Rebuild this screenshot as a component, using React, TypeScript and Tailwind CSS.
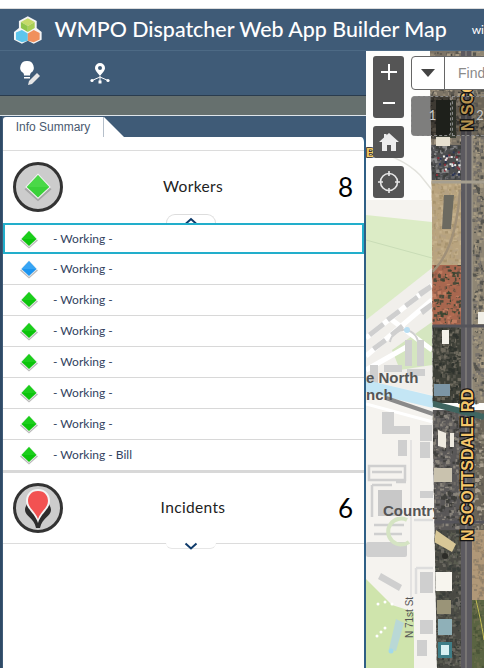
import React from "react";

function rng(seed: number) {
  let s = seed;
  return () => {
    s = (s * 16807) % 2147483647;
    return s / 2147483647;
  };
}

const regions: [number, number, number, number, string[]][] = [
  [428, 51, 36, 94, ["#7d7466", "#5b574f", "#968a76", "#46443f", "#a89c88"]],
  [428, 145, 34, 35, ["#4c4d4f", "#6a6a6c", "#3c3e3c", "#8a8a8a"]],
  [428, 180, 34, 85, ["#b9a47f", "#c4b08c", "#a8946f", "#b5a283"]],
  [428, 265, 34, 60, ["#a8674f", "#c07c60", "#3e4632", "#8f5d4a", "#b06a50", "#4a4a3a"]],
  [428, 325, 34, 78, ["#3e4038", "#54534a", "#2f332e", "#6e6a5e"]],
  [472, 51, 12, 352, ["#8f8674", "#75706a", "#a89c84", "#55544e"]],
  [428, 410, 34, 120, ["#5a5858", "#3f3f3c", "#6f6b66", "#8a857c"]],
  [472, 410, 12, 120, ["#6a6458", "#86806f", "#5a5650", "#aaa090"]],
  [428, 530, 34, 138, ["#4a4a44", "#3a3e3a", "#6a6860", "#5a5c50"]],
  [472, 530, 12, 70, ["#b09878", "#a08a6c", "#90806a"]],
  [472, 600, 12, 68, ["#5a6442", "#4a5438", "#6a6c4c"]],
];

function SatTexture() {
  const r = rng(4242);
  const items: React.ReactNode[] = [];
  regions.forEach(([x, y, w, h, cols], n) => {
    items.push(<rect key={`b${n}`} x={x} y={y} width={w} height={h} fill={cols[0]} />);
    const count = Math.floor((w * h) / 7);
    for (let i = 0; i < count; i++) {
      items.push(
        <rect
          key={`${n}-${i}`}
          x={x + r() * (w - 2)}
          y={y + r() * (h - 2)}
          width={1 + r() * 3}
          height={1 + r() * 3}
          fill={cols[Math.floor(r() * cols.length)]}
        />
      );
    }
  });
  return <g>{items}</g>;
}

function Cars() {
  const r = rng(7);
  const items: React.ReactNode[] = [];
  for (let i = 0; i < 36; i++) {
    items.push(<rect key={i} x={436 + r() * 24} y={150 + r() * 26} width={2} height={2} fill={["#8a2f3a", "#e8e8e8", "#2b3555"][i % 3]} />);
  }
  return <g>{items}</g>;
}

function MapDrawing() {
  const roadLabel = {
    fontFamily: "'Liberation Sans', sans-serif",
    fontWeight: 700,
    fontSize: 16,
    fill: "#f5c56a",
    stroke: "#141414",
    strokeWidth: 2.6,
    paintOrder: "stroke",
  } as React.CSSProperties;
  const place = { fontFamily: "'Liberation Sans', sans-serif", fontWeight: 700, fill: "#555555", fontSize: 15 } as React.CSSProperties;
  return (
    <svg viewBox="366 51 118 617" className="block h-full w-full">
      <defs>
        <clipPath id="sat">
          <path d="M430 51H484V668H437L433 440L432 210Z" />
        </clipPath>
      </defs>
      <rect x="366" y="51" width="118" height="617" fill="#fdfdfb" />
      <path d="M366 200H440V668H366Z" fill="#f5f3ef" />
      <path d="M366 150Q400 155 420 175L432 190" stroke="#e2e2dc" strokeWidth="1.5" fill="none" />
      <path d="M366 215L432 222V275L395 300L384 335L366 337Z" fill="#dcecc6" />
      <path d="M366 240L432 258" stroke="#c9dcb6" strokeWidth="1" fill="none" />
      <path d="M366 320L432 268V395L366 380Z" fill="#f1efeb" />
      <path d="M392 350L432 322V365L400 370Z" fill="#d5e6c0" />
      <g stroke="#ffffff" strokeWidth="5" fill="none">
        <path d="M366 338L432 285M366 356L432 300M392 320L432 350M366 370L410 345" />
      </g>
      <g fill="#cfcfcf">
        <path d="M368 333l14-11 3 4-14 11zM386 318l12-9 3 4-12 9zM404 304l12-9 3 4-12 9zM418 292l12-8 2 5-11 8z" />
        <path d="M372 347l12-9 3 4-12 9zM390 333l11-9 3 4-11 9zM420 310l11-8 2 5-10 8z" />
        <rect x="405" y="340" width="7" height="26" />
        <rect x="417" y="340" width="7" height="26" />
        <rect x="370" y="365" width="8" height="18" />
        <rect x="384" y="365" width="18" height="7" />
        <rect x="407" y="369" width="18" height="7" />
      </g>
      <path d="M390 342a14 14 0 0 1 28 4v14" stroke="#cfcfcf" strokeWidth="2" fill="none" />
      <circle cx="407" cy="330" r="3" fill="#b9def2" />
      <path d="M366 380L433 396V408L366 392Z" fill="#c4e6f5" />
      <path d="M386 398L433 414" stroke="#8a8a8a" strokeWidth="4" />
      <path d="M366 404L433 422" stroke="#ffffff" strokeWidth="3" />
      <g fill="#cfcfcf">
        <path d="M382 412h12v14h16v8h-28z" />
        <path d="M420 425h12v16h-12z" />
        <path d="M398 440h9v16h-9zM420 442h10v16h-10z" />
        <path d="M378 490h24v26h-24z" fill="#c8c8c8" />
        <rect x="366" y="542" width="41" height="15" rx="2" />
        <path d="M381 573l21 12-3 6-21-12z" />
        <rect x="420" y="572" width="13" height="21" />
        <rect x="420" y="491" width="13" height="7" />
        <rect x="417" y="640" width="10" height="16" />
        <rect x="420" y="620" width="13" height="14" />
        <path d="M390 660h10v8h-10z" />
      </g>
      <g stroke="#cfcfcf" strokeWidth="2.5" fill="none">
        <rect x="369" y="466" width="36" height="14" />
        <path d="M372 472h30M372 485h20M396 482h10M372 485v32M374 525h30M374 534h28" />
        <path d="M414 520h19M416 568h17M416 568v26" stroke="#dddddd" />
      </g>
      <path d="M407 520a13 13 0 1 0 2 22" stroke="#d5e4c3" strokeWidth="4" fill="none" />
      <path d="M366 579L392 605L414 612V668H366Z" fill="#cfe4ac" />
      <path d="M396 619l8 4-8 28-7-2z" fill="#b9d8d6" />
      <circle cx="391" cy="651" r="2.5" fill="#a2d9ea" />
      <g fill="#ffffff">
        <circle cx="378" cy="604" r="1.5" /><circle cx="385" cy="602" r="1.5" /><circle cx="392" cy="604" r="1.5" />
        <circle cx="381" cy="632" r="1.5" /><circle cx="377" cy="636" r="1.5" /><circle cx="385" cy="628" r="1.5" />
      </g>
      <path d="M411 440V600" stroke="#dedede" strokeWidth="1.5" />
      <text x="366" y="383" style={place}>e North</text>
      <text x="366" y="400" style={place}>nch</text>
      <text x="383" y="516" style={place}>Country</text>
      <text transform="translate(413 638) rotate(-90)" style={{ fontFamily: "'Liberation Sans', sans-serif", fontSize: 10, fill: "#555555" }}>N 71st St</text>
      <text x="366" y="157" style={{ fontFamily: "'Liberation Sans', sans-serif", fontSize: 13, fontWeight: 700, fill: "#f2c766", stroke: "#111", strokeWidth: 1.5, paintOrder: "stroke" }}>Bll</text>

      <g clipPath="url(#sat)">
        <SatTexture />
        <Cars />
        <rect x="461" y="51" width="11" height="617" fill="#5c5a60" />
        <path d="M466 51V668" stroke="#8a8780" strokeWidth="1.2" />
        <path d="M472 51V403" stroke="#a39d8f" strokeWidth="1" />
        <path d="M430 182H484" stroke="#a69f90" strokeWidth="3" />
        <path d="M430 326H484M430 522H484" stroke="#55545a" strokeWidth="3" />
        <path d="M430 403L484 417" stroke="#3f6560" strokeWidth="6" />
        <path d="M444 195h10l-3 34h-9z" fill="#6c6a60" />
        <path d="M460 190Q456 250 432 272" stroke="#a09078" strokeWidth="2.5" fill="none" />
        <path d="M436 100h20v38h-20z" fill="#3c4036" />
        <rect x="436" y="137" width="14" height="9" fill="#e6e0d0" />
        <rect x="442" y="330" width="7" height="14" fill="#f4f2ea" />
        <rect x="478" y="312" width="6" height="12" fill="#f0eee6" />
        <path d="M434 384h16v12h-16z" fill="#7c96a6" />
        <path d="M438 430l8 3v15l-8-2zM450 433h4v14h-4z" fill="#eeeae0" />
        <path d="M434 468h18v14h-18z" fill="#c9c2ae" />
        <path d="M436 530l20 14-4 8-18-10z" fill="#d8c797" />
        <circle cx="445" cy="556" r="3" fill="#2c2c28" />
        <path d="M435 572h17v19h-17z" fill="#f7f5ee" />
        <path d="M437 600h14v14h-14z" fill="#9a9478" />
        <path d="M438 619h14v16h-14z" fill="#8fb0b8" />
        <path d="M438 642h14v16h-14z" fill="#3f7e88" />
        <path d="M441 645h8v10h-8z" fill="#d8f0f2" />
        <path d="M476 600Q482 625 484 640" stroke="#c3bc55" strokeWidth="1" fill="none" />
      </g>
      <text transform="translate(473 541) rotate(-90)" style={roadLabel}>N SCOTTSDALE RD</text>
      <text transform="translate(473 131) rotate(-90)" style={roadLabel}>N SCOTT</text>
    </svg>
  );
}

function Diamond({ color, size = 20 }: { color: "green" | "blue" | "big"; size?: number }) {
  const fill = color === "blue" ? "#1c95f0" : color === "big" ? "#3bd13a" : "#0cc40c";
  const hi = color === "blue" ? "#5bb8f8" : color === "big" ? "#5ee05c" : "#2fdc2f";
  return (
    <svg width={size} height={size} viewBox="0 0 20 20" className="block shrink-0">
      <path d="M10 3L19 11.5L10 19.5L1 11.5Z" fill="#8c8c8c" opacity="0.6" />
      <path d="M10 1L18.5 10L10 18L1.5 10Z" fill="#f4f4f4" />
      <path d="M10 2L17.5 10L10 17L2.5 10Z" fill={fill} />
      <path d="M10 2L17.5 10L2.5 10Z" fill={hi} opacity="0.45" />
    </svg>
  );
}

function Badge({ kind }: { kind: "diamond" | "pin" }) {
  return (
    <div className="flex h-[50px] w-[50px] shrink-0 items-center justify-center rounded-full border-[3px] border-[#333333] bg-[#cccccc]">
      {kind === "diamond" ? (
        <Diamond color="big" size={30} />
      ) : (
        <svg width="44" height="44" viewBox="0 0 44 44" className="block">
          <path d="M9 24c0-4 3-6 3-10h20c0 4 3 6 3 10 0 6-9 8-11 18h-4C18 32 9 30 9 24Z" fill="#2d2d2d" />
          <path d="M22 3C14 3 10 9 10 15c0 8 9 12 12 22 3-10 12-14 12-22C34 9 30 3 22 3Z" fill="#f4f4f4" />
          <path d="M22 5C15 5 12 10 12 15c0 7 8 11 10 18 2-7 10-11 10-18 0-5-3-10-10-10Z" fill="#f25252" />
        </svg>
      )}
    </div>
  );
}

function ChevronTab({ up }: { up: boolean }) {
  return (
    <div
      className={
        up
          ? "absolute bottom-0 left-[163px] flex h-[9px] w-[50px] justify-center overflow-hidden rounded-t-[9px] border border-b-0 border-[#dddddd] bg-white"
          : "absolute left-[163px] top-full flex h-[6px] w-[50px] items-end justify-center overflow-visible rounded-b-[9px] border-b border-[#e6e6e6] bg-white"
      }
    >
      <svg width="14" height="8" viewBox="0 0 14 8" className={up ? "mt-[2px] block shrink-0" : "mb-[-2px] block shrink-0"}>
        <path d={up ? "M1.5 7L7 2L12.5 7" : "M1.5 1.5L7 6.5L12.5 1.5"} stroke="#0f3b6b" strokeWidth="2" fill="none" />
      </svg>
    </div>
  );
}

function Section({ label, count, kind, up, h }: { label: string; count: number; kind: "diamond" | "pin"; up: boolean; h: string }) {
  return (
    <div className={`relative flex items-center pl-[10px] pr-[11px] ${h}`}>
      <Badge kind={kind} />
      <div className="absolute left-[86px] right-[67px] top-0 bottom-0 flex items-center justify-center text-[15.5px] tracking-[0.35px] text-[#222222]">{label}</div>
      <div className="ml-auto text-[26px] leading-none text-black">{count}</div>
      <ChevronTab up={up} />
    </div>
  );
}

function Row({ text, blue, active }: { text: string; blue?: boolean; active?: boolean }) {
  return (
    <div
      className={
        active
          ? "flex h-[31px] items-center border-2 border-[#22aecb] pl-[14px] text-[12px] text-[#33435f]"
          : "flex h-[31px] items-center border-b border-[#d8d8d8] pl-[16px] text-[12px] text-[#33435f]"
      }
    >
      <Diamond color={blue ? "blue" : "green"} size={20} />
      <span className="ml-[14px]">{text}</span>
    </div>
  );
}

function Logo() {
  return (
    <svg width="30" height="30" viewBox="0 0 30 30" className="block">
      <path d="M15 1L24 6V13L29 17V25L21 29L15 26L9 29L1 25V17L6 13V6Z" fill="#f4f4f4" />
      <path d="M15 3L22 7L15 11L8 7Z" fill="#c5da68" />
      <path d="M8 7L15 11V17L8 13Z" fill="#8fc54a" />
      <path d="M22 7L15 11V17L22 13Z" fill="#a9cf55" />
      <path d="M9 15L15 18.5V26L9 27.5L3 24.5V17.5Z" fill="#5cc5ec" />
      <path d="M21 15L27 18V24.5L21 27.5L15 26V18.5Z" fill="#f0905c" />
    </svg>
  );
}

export default function App() {
  return (
    <div className="flex h-[668px] w-[484px] flex-col overflow-hidden bg-white font-['Lato','Noto_Sans',sans-serif]">
      <div className="h-[9px] shrink-0 border-b border-[#dcdcdc] bg-white" />
      <div className="flex h-[42px] shrink-0 items-center overflow-hidden border-b border-[#4d6a85] bg-[#3f5b77] pl-[13px]">
        <Logo />
        <span className="ml-[12px] whitespace-nowrap text-[21.4px] font-medium text-white">WMPO Dispatcher Web App Builder Map</span>
        <span className="ml-[25px] whitespace-nowrap text-[12px] text-white">wi</span>
      </div>
      <div className="flex min-h-0 flex-1">
        <div className="flex w-[366px] shrink-0 flex-col bg-[#3f5b77]">
          <div className="flex h-[45px] shrink-0 items-center border-b border-[#2a3c4e] pl-[19px]">
            <svg width="22" height="26" viewBox="0 0 22 26" className="block">
              <path d="M8 1a6.5 6.5 0 0 0-4 11.8c.8.7 1 1.6 1 2.7h6c0-1.1.3-2 1-2.7A6.5 6.5 0 0 0 8 1Z" fill="#ffffff" />
              <rect x="5" y="17" width="6" height="1.5" fill="#ffffff" />
              <path d="M9 25l1-4 8-8 3 3-8 8Z" fill="#e6e6e6" />
            </svg>
            <svg width="20" height="22" viewBox="0 0 20 22" className="ml-[49px] block">
              <path d="M10 1a5 5 0 0 0-5 5c0 3 3 5 5 8 2-3 5-5 5-8a5 5 0 0 0-5-5Zm0 3a2 2 0 1 1 0 4 2 2 0 0 1 0-4Z" fill="#ffffff" fillRule="evenodd" />
              <path d="M10 14v6M10 15L2 18.5M10 15l8 3.5" stroke="#ffffff" strokeWidth="1" />
              <rect x="8.5" y="18.5" width="3" height="3" fill="#ffffff" />
              <circle cx="2" cy="18.5" r="1.6" fill="#ffffff" />
              <circle cx="18" cy="18.5" r="1.6" fill="#ffffff" />
            </svg>
          </div>
          <div className="h-[20px] shrink-0 border-b border-[#dfe5ea] bg-[#66706e]" />
          <div className="flex min-h-0 flex-1 flex-col border-l-2 border-[#2f4a66] pl-px">
            <div className="flex h-[21px] shrink-0 items-end">
              <div className="flex h-[20px] w-[101px] items-center justify-center rounded-tl-[3px] border-r border-[#b5bfca] bg-white font-['Liberation_Sans',sans-serif] text-[12px] text-[#4a5a70]">
                Info Summary
              </div>
              <svg width="20" height="20" viewBox="0 0 20 20" className="block">
                <path d="M0 0L20 20H0Z" fill="#ffffff" />
              </svg>
            </div>
            <div className="flex min-h-0 flex-1 flex-col rounded-tr-[5px] border-r-[2px] border-[#2f5f85] bg-white">
              <div className="h-[14px] shrink-0 rounded-tr-[5px] border-b border-[#dcdcdc]" />
              <div className="flex flex-col">
                <Section label="Workers" count={8} kind="diamond" up h="h-[72px]" />
                <Row text="- Working -" active />
                <Row text="- Working -" blue />
                <Row text="- Working -" />
                <Row text="- Working -" />
                <Row text="- Working -" />
                <Row text="- Working -" />
                <Row text="- Working -" />
                <div className="border-b-2 border-[#d8d8d8]">
                  <Row text="- Working - Bill" />
                </div>
                <Section label="Incidents" count={6} kind="pin" up={false} h="h-[71px] border-b border-[#dcdcdc]" />
              </div>
            </div>
          </div>
        </div>
        <div className="relative min-w-0 flex-1 overflow-hidden">
          <MapDrawing />
          <div className="absolute left-[7px] top-[5px] flex h-[62px] w-[31px] flex-col items-center rounded-[3px] bg-[#555555] text-white">
            <span className="flex h-[31px] items-center justify-center">
              <svg width="18" height="18" viewBox="0 0 18 18"><path d="M9 1V17M1 9H17" stroke="#fff" strokeWidth="2" /></svg>
            </span>
            <span className="flex h-[31px] items-center justify-center">
              <svg width="14" height="14" viewBox="0 0 14 14"><path d="M1 7H13" stroke="#fff" strokeWidth="2" /></svg>
            </span>
          </div>
          <div className="absolute left-[7px] top-[75px] flex h-[32px] w-[31px] items-center justify-center rounded-[3px] bg-[#555555]">
            <svg width="22" height="22" viewBox="0 0 22 22">
              <path d="M11 2L21 11H18V20H13V14H9V20H4V11H1L6 6.5V3H8.5V4.2Z" fill="#ececec" />
            </svg>
          </div>
          <div className="absolute left-[7px] top-[115px] flex h-[32px] w-[31px] items-center justify-center rounded-[3px] bg-[#555555]">
            <svg width="22" height="22" viewBox="0 0 22 22">
              <circle cx="11" cy="11" r="8.5" stroke="#e8e8e8" strokeWidth="1.6" fill="none" />
              <path d="M11 0V5M11 17V22M0 11H5M17 11H22" stroke="#e8e8e8" strokeWidth="1.6" />
            </svg>
          </div>
          <div className="absolute left-[45px] top-[5px] flex h-[34px] w-[90px] items-center rounded-l-[4px] border border-[#666666] bg-white">
            <div className="flex h-full w-[33px] shrink-0 items-center justify-center border-r border-[#666666]">
              <svg width="14" height="8" viewBox="0 0 14 8"><path d="M0 0H14L7 8Z" fill="#444444" /></svg>
            </div>
            <span className="pl-[13px] font-['Liberation_Sans',sans-serif] text-[14px] text-[#8a8a8a]">Find</span>
          </div>
          <div className="absolute left-[45px] top-[45px] flex h-[40px] w-[40px] items-center justify-center rounded-[4px] border border-dashed border-[#8a8a8a] bg-black/50 pl-[3px] text-[13px] text-[#c8c8c8]">1</div>
          <div className="absolute left-[86px] top-[45px] flex h-[40px] w-[56px] items-center justify-center border border-dashed border-[#8a8a8a] bg-black/25 text-[13px] text-[#c8c8c8]">2</div>
        </div>
      </div>
    </div>
  );
}
